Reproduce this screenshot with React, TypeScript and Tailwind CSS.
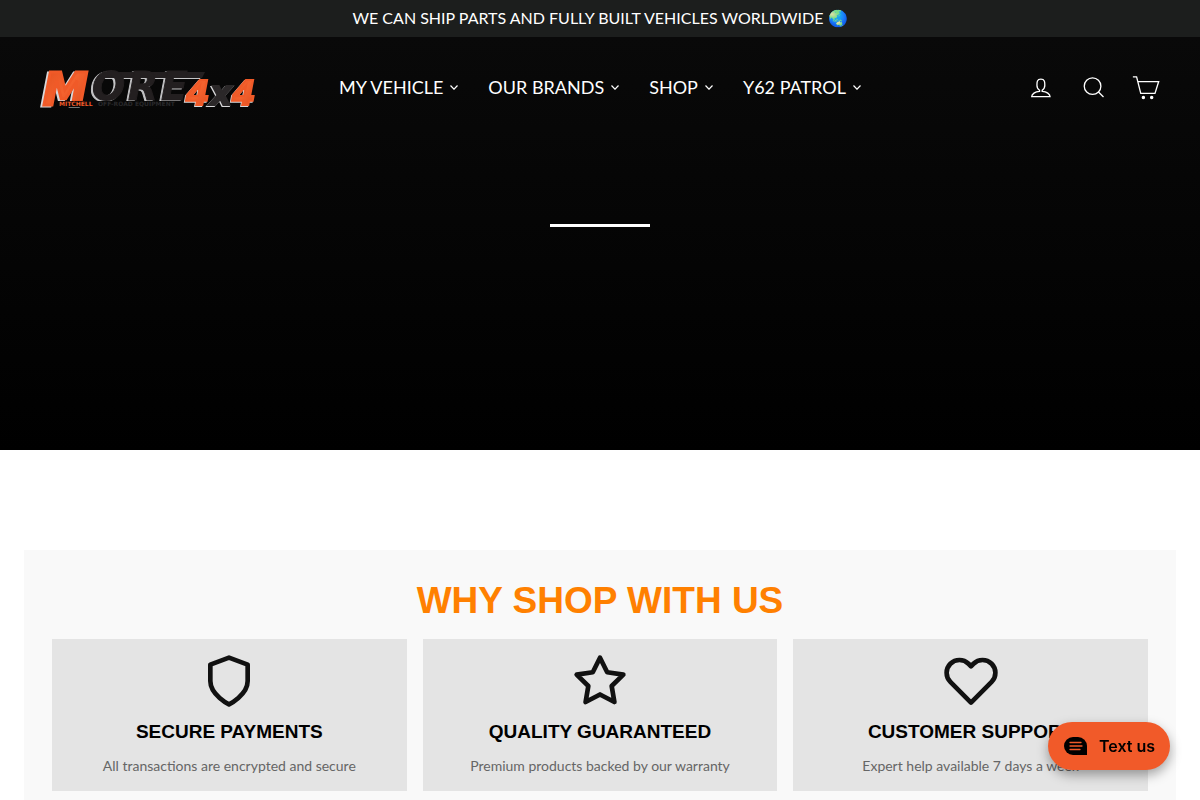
import type { ReactNode } from "react";

const navItems = ["MY VEHICLE", "OUR BRANDS", "SHOP", "Y62 PATROL"];

function Logo() {
  return (
    <svg viewBox="0 0 220 52" className="h-[52px] w-[220px] overflow-visible" role="img" aria-label="MORE 4x4 Mitchell Off-Road Equipment">
      <defs>
        <linearGradient id="flame" x1="0" y1="0" x2="1" y2="1">
          <stop offset="0" stopColor="#e2501f" />
          <stop offset="0.5" stopColor="#f4622e" />
          <stop offset="1" stopColor="#d84a1e" />
        </linearGradient>
      </defs>
      <g fontFamily="DejaVu Sans, sans-serif" fontWeight="700" fontStyle="italic">
        <g className="drop-shadow-[-2px_1px_0_#c4c4c6]">
          <path d="M66 11H165L162 17H63Z" fill="#231f20" />
          <g fontSize="39" fill="#231f20" stroke="#231f20" strokeWidth="1">
            <text x="52" y="39">O</text>
            <text x="88" y="39">R</text>
            <text x="121" y="39">E</text>
          </g>
        </g>
        <g className="drop-shadow-[-2px_1px_0_#d8d8da]">
          <text x="3" y="44" fontSize="45" fill="url(#flame)" stroke="#f05a28" strokeWidth="3">M</text>
        </g>
        <path d="M18 40H148V46H17Z" fill="#080808" />
        <g className="drop-shadow-[-1px_1px_0_#d8d8da]" fontSize="34">
          <text x="146" y="44" fill="url(#flame)" stroke="#f05a28" strokeWidth="2">4</text>
          <text x="170" y="44" fill="#2b2829" stroke="#2b2829" strokeWidth="2">x</text>
          <text x="192" y="44" fill="url(#flame)" stroke="#f05a28" strokeWidth="2">4</text>
        </g>
      </g>
      <g fontFamily="DejaVu Sans, sans-serif" fontSize="6" fontWeight="700">
        <text x="19" y="45" fill="#f05a28">MITCHELL</text>
        <text x="58" y="45" fill="#29292b">OFF-ROAD EQUIPMENT</text>
      </g>
    </svg>
  );
}

function HeaderIcon({ label, children }: { label: string; children: ReactNode }) {
  return (
    <a href="#" aria-label={label} className="block">
      <svg viewBox="0 0 64 64" className="size-7" fill="none" stroke="currentColor" strokeWidth="3" strokeMiterlimit="10">
        {children}
      </svg>
    </a>
  );
}

function Feature({ title, text, children }: { title: string; text: string; children: ReactNode }) {
  return (
    <article className="flex flex-col items-center bg-[#e4e4e4] px-4 pt-[14px] pb-[13px] text-center">
      <svg viewBox="0 0 24 24" className="size-14" fill="none" stroke="#111" strokeWidth="2" strokeLinecap="round" strokeLinejoin="round" aria-hidden="true">
        {children}
      </svg>
      <h3 className="mt-[11px] font-['Liberation_Sans',sans-serif] text-[19px] leading-6 font-bold text-black">{title}</h3>
      <p className="mt-[10px] text-[14px] leading-6 text-[#666]">{text}</p>
    </article>
  );
}

export default function App() {
  return (
    <div className="min-h-screen overflow-x-hidden bg-white font-['Lato',sans-serif]">
      <div className="bg-[#1c1e1d] px-4 pt-[7px] pb-[9px] text-center text-[16px] leading-[21px] text-white">
        WE CAN SHIP PARTS AND FULLY BUILT VEHICLES WORLDWIDE 🌏
      </div>
      <div className="bg-linear-to-b/srgb from-[#090909] to-black pb-[223px] text-white">
        <header className="flex items-center px-10 pt-6 pb-[26px]">
          <div className="flex-1">
            <a href="#" className="inline-block align-top"><Logo /></a>
          </div>
          <nav className="flex items-center gap-[30px] text-[18px] leading-6">
            {navItems.map((item) => (
              <a key={item} href="#" className="flex items-center gap-[7px] whitespace-nowrap">
                {item}
                <svg viewBox="0 0 8 6" className="h-[6px] w-2" fill="none" stroke="currentColor" strokeWidth="1.2" aria-hidden="true">
                  <path d="M.5 1.500L4 5.200L7.500 1.500" />
                </svg>
              </a>
            ))}
          </nav>
          <div className="flex flex-1 items-center justify-end gap-[25px]">
            <HeaderIcon label="Log in">
              <path d="M37 41.840v-2.530c3.300-1.910 6-6.660 6-11.410 0-7.630 0-13.820-9-13.820s-9 6.190-9 13.820c0 4.750 2.700 9.510 6 11.410v2.530c-10.180.850-18 6-18 12.160h42c0-6.190-7.820-11.310-18-12.160z" />
            </HeaderIcon>
            <HeaderIcon label="Search">
              <circle cx="31" cy="30" r="19" />
              <path d="M44.500 43.500L56 55" />
            </HeaderIcon>
            <HeaderIcon label="Cart">
              <path d="M2 9h8.500L20 46.500h32.500L61 19.500H13.200" />
              <circle cx="26" cy="56" r="2.500" fill="currentColor" />
              <circle cx="45" cy="56" r="2.500" fill="currentColor" />
            </HeaderIcon>
          </div>
        </header>
        <div className="mx-auto mt-[85px] h-[3px] w-[100px] bg-white" />
      </div>
      <main className="px-6 pt-[100px]">
        <section className="bg-[#f9f9f9] px-7 pt-7 pb-7">
          <h2 className="text-center font-['Liberation_Sans',sans-serif] text-[37px] leading-[45px] font-bold text-[#ff8000]">
            WHY SHOP WITH US
          </h2>
          <div className="mt-4 grid grid-cols-3 gap-4">
            <Feature title="SECURE PAYMENTS" text="All transactions are encrypted and secure">
              <path d="M12 22s8-4 8-10V5l-8-3-8 3v7c0 6 8 10 8 10z" />
            </Feature>
            <Feature title="QUALITY GUARANTEED" text="Premium products backed by our warranty">
              <path d="M12 2L15.090 8.260 22 9.270 17 14.140 18.180 21.020 12 17.770 5.820 21.020 7 14.140 2 9.270 8.910 8.260z" />
            </Feature>
            <Feature title="CUSTOMER SUPPORT" text="Expert help available 7 days a week">
              <path d="M20.840 4.610a5.500 5.500 0 0 0-7.780 0L12 5.670l-1.060-1.060a5.500 5.500 0 0 0-7.780 7.780l1.060 1.060L12 21.230l7.780-7.780 1.060-1.060a5.500 5.500 0 0 0 0-7.780z" />
            </Feature>
          </div>
        </section>
      </main>
      <button type="button" className="fixed right-[30px] bottom-[30px] flex h-12 items-center gap-3 rounded-full bg-[#f15a29] pr-[15px] pl-4 font-['Inter',sans-serif] text-[16px] font-semibold text-black shadow-[0_5px_12px_rgba(0,0,0,0.35)]">
        <svg viewBox="0 0 23 18" className="h-[18px] w-[23px]" aria-hidden="true">
          <path d="M9 0h5a9 9 0 0 1 9 9v9H9A9 9 0 0 1 9 0z" fill="#000" />
          <path d="M6 5.500h11M6 9h12M6 12.500h10" stroke="#f15a29" strokeWidth="1.300" strokeLinecap="round" />
        </svg>
        Text us
      </button>
    </div>
  );
}
